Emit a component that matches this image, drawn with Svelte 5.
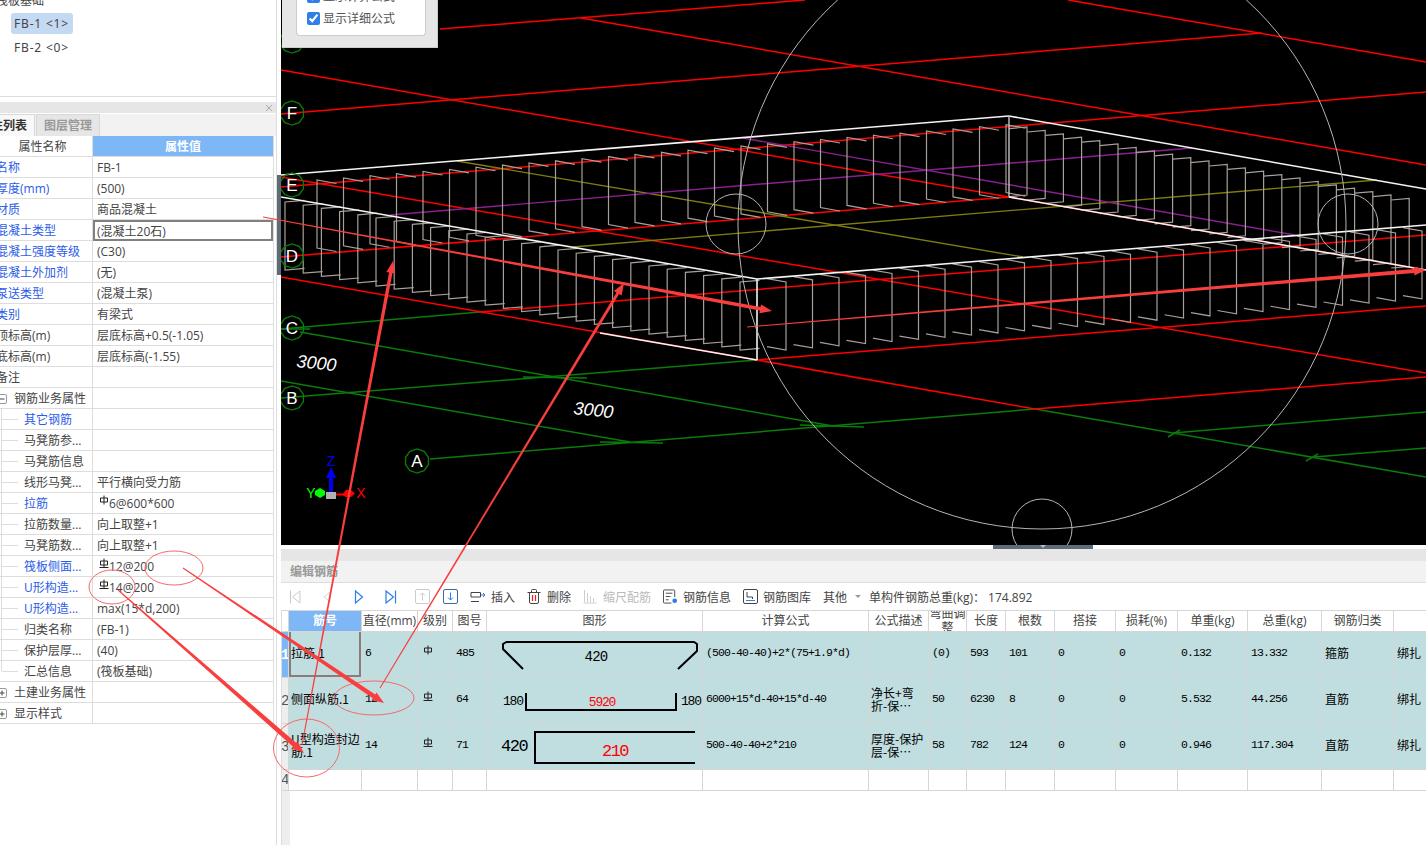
<script lang="ts">
  type Seg = [number, number, number, number];

  const red: Seg[] = [
    [440, 29, 805, 0],
    [581, 18, 1426, 165],
    [281, 114, 1262, 33],
    [281, 70, 1009, 197],
    [1068, 0, 1426, 62],
    [281, 187, 1426, 92],
    [281, 177, 1426, 373],
    [281, 257, 1009, 197],
    [281, 277, 757, 360],
    [757, 360, 1035, 409],
    [1035, 409, 1426, 377],
    [757, 360, 1426, 306],
    [480, 312, 1426, 235],
    [1009, 197, 1426, 270]
  ];
  const green: Seg[] = [
    [281, 329, 480, 312],
    [281, 329, 310, 329],
    [300, 332, 833, 426],
    [281, 398, 757, 360],
    [523, 377, 587, 378],
    [281, 381, 630, 442],
    [430, 459, 1035, 409],
    [600, 442, 663, 443],
    [800, 425, 864, 427],
    [1035, 409, 1426, 477],
    [1173, 433, 1426, 412],
    [1168, 437, 1180, 430],
    [1314, 457, 1426, 448],
    [1306, 461, 1318, 454]
  ];
  const olive: Seg[] = [
    [457, 161, 1023, 257],
    [573, 247, 1377, 180]
  ];
  const purple: Seg[] = [
    [390, 215, 1192, 148],
    [743, 138, 1295, 235]
  ];
  const white: Seg[] = [
    [281, 175, 1009, 116],
    [1009, 116, 1426, 189],
    [281, 197, 757, 279],
    [757, 279, 1426, 225],
    [757, 279, 757, 360],
    [600, 333, 757, 360],
    [1009, 197, 1426, 270]
  ];

  const stirrupRows = [
    { x: 317, y: 180, dx: 26.5, dy: -2.13, n: 27, hx: 19.5, hy: 3.5 },
    { x: 1027, y: 127, dx: 18.2, dy: 3.4, n: 22, hx: -18, hy: 1.6 },
    { x: 285, y: 202, dx: 18.2, dy: 3.2, n: 26, hx: 19.5, hy: -1.6 },
    { x: 786, y: 282, dx: 26.5, dy: -2.13, n: 25, hx: -19, hy: -3.3 }
  ];
  const stirrups = stirrupRows.flatMap((r) =>
    Array.from({ length: r.n }, (_, i) => {
      const x = r.x + i * r.dx;
      const y = r.y + i * r.dy;
      return `M${x + r.hx} ${y + r.hy}L${x} ${y}V${y + 68}L${x + r.hx} ${y + 68 + r.hy}`;
    })
  );

  const axes = [
    { id: 'G', x: 292, y: 41 },
    { id: 'F', x: 292, y: 113 },
    { id: 'E', x: 292, y: 185 },
    { id: 'D', x: 292, y: 256 },
    { id: 'C', x: 292, y: 328 },
    { id: 'B', x: 292, y: 398 },
    { id: 'A', x: 417, y: 461 }
  ];
  const ring = (cx: number, cy: number) =>
    Array.from({ length: 10 }, (_, i) => {
      const a = (i * Math.PI) / 5 + Math.PI / 2;
      return `${cx + 12 * Math.cos(a)},${cy + 12 * Math.sin(a)}`;
    }).join(' ');

  const arrow = (x1: number, y1: number, x2: number, y2: number, w: number) => {
    const len = Math.hypot(x2 - x1, y2 - y1);
    const ux = (x2 - x1) / len;
    const uy = (y2 - y1) / len;
    const bx = x2 - ux * 12;
    const by = y2 - uy * 12;
    const side = (x: number, y: number, d: number) => `${x - uy * d},${y + ux * d}`;
    return [
      side(x1, y1, 0.5),
      side(bx, by, w / 2),
      side(bx, by, 4.5),
      `${x2},${y2}`,
      side(bx, by, -4.5),
      side(bx, by, -w / 2),
      side(x1, y1, -0.5)
    ].join(' ');
  };
  const arrows = [
    arrow(183, 568, 384, 703, 4.5),
    arrow(118, 590, 304, 753, 5),
    arrow(263, 217, 772, 311, 3.5),
    arrow(302, 745, 393, 261, 3.5),
    arrow(380, 688, 624, 283, 3),
    arrow(747, 327, 1426, 270, 4)
  ];

  const props = [
    { name: '名称', value: 'FB-1', link: true },
    { name: '厚度(mm)', value: '(500)', link: true },
    { name: '材质', value: '商品混凝土', link: true },
    { name: '混凝土类型', value: '(混凝土20石)', link: true, active: true },
    { name: '混凝土强度等级', value: '(C30)', link: true },
    { name: '混凝土外加剂', value: '(无)', link: true },
    { name: '泵送类型', value: '(混凝土泵)', link: true },
    { name: '类别', value: '有梁式', link: true },
    { name: '顶标高(m)', value: '层底标高+0.5(-1.05)' },
    { name: '底标高(m)', value: '层底标高(-1.55)' },
    { name: '备注', value: '' },
    { name: '钢筋业务属性', value: '', group: '-' },
    { name: '其它钢筋', value: '', link: true, child: true },
    { name: '马凳筋参...', value: '', child: true },
    { name: '马凳筋信息', value: '', child: true },
    { name: '线形马凳...', value: '平行横向受力筋', child: true },
    { name: '拉筋', value: '6@600*600', link: true, child: true, bar: 1 },
    { name: '拉筋数量...', value: '向上取整+1', child: true },
    { name: '马凳筋数...', value: '向上取整+1', child: true },
    { name: '筏板侧面...', value: '12@200', link: true, child: true, bar: 2 },
    { name: 'U形构造...', value: '14@200', link: true, child: true, bar: 2 },
    { name: 'U形构造...', value: 'max(15*d,200)', link: true, child: true },
    { name: '归类名称', value: '(FB-1)', child: true },
    { name: '保护层厚...', value: '(40)', child: true },
    { name: '汇总信息', value: '(筏板基础)', child: true, last: true },
    { name: '土建业务属性', value: '', group: '+' },
    { name: '显示样式', value: '', group: '+' }
  ];

  const columns = [
    { title: '', width: 8 },
    { title: '筋号', width: 73 },
    { title: '直径(mm)', width: 56 },
    { title: '级别', width: 35 },
    { title: '图号', width: 34 },
    { title: '图形', width: 216 },
    { title: '计算公式', width: 166 },
    { title: '公式描述', width: 60 },
    { title: '弯曲调整', width: 38 },
    { title: '长度', width: 39 },
    { title: '根数', width: 49 },
    { title: '搭接', width: 61 },
    { title: '损耗(%)', width: 62 },
    { title: '单重(kg)', width: 70 },
    { title: '总重(kg)', width: 74 },
    { title: '钢筋归类', width: 72 },
    { title: '', width: 40 }
  ];
  const bars = [
    { name: '拉筋.1', dia: '6', grade: 1, fig: '485', formula: '(500-40-40)+2*(75+1.9*d)', note: '', bend: '(0)', len: '593', count: '101', unit: '0.132', total: '13.332', kind: '箍筋' },
    { name: '侧面纵筋.1', dia: '12', grade: 2, fig: '64', formula: '6000+15*d-40+15*d-40', note: '净长+弯折-保…', bend: '50', len: '6230', count: '8', unit: '5.532', total: '44.256', kind: '直筋' },
    { name: 'U型构造封边筋.1', dia: '14', grade: 2, fig: '71', formula: '500-40-40+2*210', note: '厚度-保护层-保…', bend: '58', len: '782', count: '124', unit: '0.946', total: '117.304', kind: '直筋' }
  ];
</script>

{#snippet barMark(kind: number)}
  <svg class="bar-mark" width="10" height="11" viewBox="0 0 10 11">
    <path d="M1.5 3V7H8.5V3ZM5 .5V9.5" fill="none" stroke="#222" stroke-width="1" />
    {#if kind === 2}<path d="M.5 9.5H9.5" fill="none" stroke="#222" stroke-width="1" />{/if}
  </svg>
{/snippet}

<div class="app">
  <aside class="side">
    <div class="tree">
      <div class="tree-root">筏板基础</div>
      <div class="tree-item selected">FB-1 &lt;1&gt;</div>
      <div class="tree-item">FB-2 &lt;0&gt;</div>
    </div>
    <div class="close-bar">
      <svg width="8" height="8" viewBox="0 0 8 8"><path d="M1 1L7 7M7 1L1 7" stroke="#aaa" fill="none" /></svg>
    </div>
    <div class="tabs">
      <div class="tab on">属性列表</div>
      <div class="tab">图层管理</div>
    </div>
    <div class="props">
      <div class="prop head">
        <div class="name">属性名称</div>
        <div class="val">属性值</div>
      </div>
      {#each props as p}
        <div class="prop">
          <div class="name" class:link={p.link} class:child={p.child} class:last={p.last} class:group={p.group}>
            {#if p.group}
              <svg width="10" height="10" viewBox="0 0 10 10">
                <rect x=".5" y=".5" width="9" height="9" rx="1.5" fill="#fff" stroke="#999" />
                <path d={p.group === '+' ? 'M2.5 5H7.5M5 2.5V7.5' : 'M2.5 5H7.5'} stroke="#444" />
              </svg>
            {/if}
            <span>{p.name}</span>
          </div>
          <div class="val" class:active={p.active}>
            {#if p.bar}{@render barMark(p.bar)}{/if}{p.value}
          </div>
        </div>
      {/each}
    </div>
  </aside>

  <main class="main">
    <div class="viewport">
      <svg class="scene" viewBox="281 0 1145 545" width="1145" height="545">
        {#each green as s}<line x1={s[0]} y1={s[1]} x2={s[2]} y2={s[3]} stroke="#0a7c0a" stroke-width="1.5" />{/each}
        {#each red as s}<line x1={s[0]} y1={s[1]} x2={s[2]} y2={s[3]} stroke="#f00" stroke-width="1.5" />{/each}
        {#each olive as s}<line x1={s[0]} y1={s[1]} x2={s[2]} y2={s[3]} stroke="#7d7d12" stroke-width="1.4" />{/each}
        {#each purple as s}<line x1={s[0]} y1={s[1]} x2={s[2]} y2={s[3]} stroke="#8c1f90" stroke-width="1.4" />{/each}
        {#each stirrups as d}<path {d} fill="none" stroke="#a89f98" stroke-width="1.2" />{/each}
        {#each white as s}<line x1={s[0]} y1={s[1]} x2={s[2]} y2={s[3]} stroke="#f4f4f4" stroke-width="1.6" />{/each}
        <line x1="1009" y1="116" x2="1009" y2="197" stroke="#c8c4c0" stroke-width="1.4" />

        <g fill="none" stroke="#b5b5b5" stroke-width="1">
          <circle cx="1042" cy="225" r="304" />
          <circle cx="736" cy="224" r="30" />
          <circle cx="1348" cy="224" r="30" />
          <circle cx="1042" cy="529" r="30" />
        </g>

        {#each axes as a}
          <polygon points={ring(a.x, a.y)} fill="none" stroke="#0a7c0a" stroke-width="1.3" />
          <text x={a.x} y={a.y + 6} text-anchor="middle" class="axis-label">{a.id}</text>
        {/each}
        <text x="296" y="367" class="dim" transform="rotate(6 296 367)">3000</text>
        <text x="573" y="414" class="dim" transform="rotate(6 573 414)">3000</text>

        <!-- view gizmo -->
        <path d="M331 467L336 478H333V492H329V478H326Z" fill="#0000ee" />
        <rect x="326" y="492" width="10" height="7" fill="#b0b0b0" />
        <path d="M336 493.5H343L346 490H351L355 493.5L351 497H346L343 495.5H336Z" fill="#f00" />
        <path d="M320 488L325 491V495L320 498L315 495V491Z" fill="#0f0" />
        <text x="331" y="466" text-anchor="middle" class="gizmo" fill="#0000ee">Z</text>
        <text x="311" y="498" text-anchor="middle" class="gizmo" fill="#0f0">Y</text>
        <text x="361" y="498" text-anchor="middle" class="gizmo" fill="#f00">X</text>
      </svg>

      <div class="popup">
        <div class="popup-card">
          <label class="check"><input type="checkbox" checked />显示计算公式</label>
          <label class="check"><input type="checkbox" checked />显示详细公式</label>
        </div>
      </div>
    </div>

    <div class="splitter">
      <div class="splitter-handle"></div>
    </div>
    <div class="grip-bar"></div>
    <div class="editor-title">编辑钢筋</div>

    <div class="toolbar">
      <div class="nav">
        <svg width="14" height="14" viewBox="0 0 14 14"><path d="M2.5 .5V13.5M12 1V13L4.5 7Z" fill="none" stroke="#c9c9c9" /></svg>
        <svg width="14" height="14" viewBox="0 0 14 14"><path d="M10 2V12L4 7Z" fill="none" stroke="#d4d4d4" /></svg>
        <svg width="14" height="14" viewBox="0 0 14 14"><path d="M3.5 1V13L10.5 7Z" fill="none" stroke="#2b7de9" stroke-width="1.2" /></svg>
        <svg width="14" height="14" viewBox="0 0 14 14"><path d="M2 1V13L9.5 7ZM11.5 .5V13.5" fill="none" stroke="#2b7de9" stroke-width="1.2" /></svg>
      </div>
      <svg class="box-up" width="15" height="15" viewBox="0 0 15 15"><rect x=".5" y=".5" width="14" height="14" rx="1.5" fill="none" stroke="#ccc" /><path d="M7.5 11.5V4M5 6.5L7.5 4L10 6.5" fill="none" stroke="#ccc" /></svg>
      <svg class="box-down" width="15" height="15" viewBox="0 0 15 15"><rect x=".5" y=".5" width="14" height="14" rx="1.5" fill="none" stroke="#3c6a9c" /><path d="M7.5 3.5V11M5 8.5L7.5 11L10 8.5" fill="none" stroke="#2b7de9" /></svg>
      <div class="tool">
        <svg width="16" height="14" viewBox="0 0 16 14"><path d="M1 2.5H10.5V7H1ZM1 11.5H9" fill="none" stroke="#444" /><path d="M11 5H15M13 3L15 5L13 7" fill="none" stroke="#2b7de9" /></svg>
        插入
      </div>
      <div class="tool wide">
        <svg width="14" height="15" viewBox="0 0 14 15"><path d="M2.5 3.5V13A1.5 1.5 0 0 0 4 14.5H10A1.5 1.5 0 0 0 11.5 13V3.5M.5 3.5H13.5M4.5 3.5V1.5A1 1 0 0 1 5.5 .5H8.5A1 1 0 0 1 9.5 1.5V3.5" fill="none" stroke="#444" /><path d="M5.5 6V12M8.5 6V12" stroke="#e22" stroke-width="1.2" /></svg>
        删除
      </div>
      <div class="tool off wide">
        <svg width="14" height="15" viewBox="0 0 14 15"><path d="M1.5 1V13M4.5 4V13M7.5 7V13M10.5 9V13M.5 14H13.5" fill="none" stroke="#ccc" /></svg>
        缩尺配筋
      </div>
      <div class="tool">
        <svg width="15" height="15" viewBox="0 0 16 15"><path d="M12.5 8V1.5A1 1 0 0 0 11.5 .5H1.5A1 1 0 0 0 .5 1.5V13.5A1 1 0 0 0 1.5 14.5H9" fill="none" stroke="#444" /><path d="M3 4H10M3 7.5H8M3 11H6" stroke="#444" /><circle cx="12.5" cy="12" r="2.5" fill="#2b7de9" /></svg>
        钢筋信息
      </div>
      <div class="tool">
        <svg width="15" height="15" viewBox="0 0 15 15"><rect x=".5" y=".5" width="14" height="14" rx="1.5" fill="none" stroke="#444" /><path d="M4 3V8H9.5V10" fill="none" stroke="#444" /><path d="M3 11.5H12" stroke="#2b7de9" /></svg>
        钢筋图库
      </div>
      <div class="tool">其他<span class="caret"></span></div>
      <div class="total">单构件钢筋总重(kg)： 174.892</div>
    </div>

    <div class="sheet">
      <table>
        <colgroup>
          {#each columns as c}<col style:width="{c.width}px" />{/each}
        </colgroup>
        <thead>
          <tr>
            {#each columns as c, i}
              <th class:index={i === 0} class:current={i === 1}><div>{c.title}</div></th>
            {/each}
          </tr>
        </thead>
        <tbody>
          {#each bars as b, i}
            <tr class="filled">
              <td class="index" class:current={i === 0}>{i + 1}</td>
              <td class="text name-cell" class:picked={i === 0}>{b.name}</td>
              <td>{b.dia}</td>
              <td>{@render barMark(b.grade)}</td>
              <td>{b.fig}</td>
              <td class="figure">
                {#if i === 0}
                  <svg width="216" height="46" viewBox="0 0 216 46">
                    <path d="M36 36L16 16V11L19.5 9H207L210 11V18L191 36" fill="none" stroke="#000" stroke-width="2" />
                    <text x="109" y="28" text-anchor="middle" class="fig-text">420</text>
                  </svg>
                {:else if i === 1}
                  <svg width="216" height="46" viewBox="0 0 216 46">
                    <path d="M39 14V31H189V14" fill="none" stroke="#000" stroke-width="2" />
                    <text x="16" y="26" class="fig-text small">180</text>
                    <text x="115" y="27" text-anchor="middle" class="fig-text small" fill="#f00">5920</text>
                    <text x="194" y="26" class="fig-text small">180</text>
                  </svg>
                {:else}
                  <svg width="216" height="46" viewBox="0 0 216 46">
                    <path d="M208 7H48V38H208" fill="none" stroke="#000" stroke-width="2" />
                    <text x="14" y="26" class="fig-text big">420</text>
                    <text x="128" y="31" text-anchor="middle" class="fig-text big" fill="#f00">210</text>
                  </svg>
                {/if}
              </td>
              <td>{b.formula}</td>
              <td class="text note">{b.note}</td>
              <td>{b.bend}</td>
              <td>{b.len}</td>
              <td>{b.count}</td>
              <td>0</td>
              <td>0</td>
              <td>{b.unit}</td>
              <td>{b.total}</td>
              <td class="text">{b.kind}</td>
              <td class="text">绑扎</td>
            </tr>
          {/each}
          <tr class="blank">
            <td class="index">4</td>
            {#each columns.slice(1) as _}<td></td>{/each}
          </tr>
        </tbody>
      </table>
    </div>
  </main>

  <div class="side-grip"></div>

  <!-- hand-drawn markup on top of the screenshot -->
  <svg class="markup" width="1426" height="845" viewBox="0 0 1426 845">
    <g fill="none" stroke="#f46a6a" stroke-width="1">
      <ellipse cx="174" cy="568" rx="29" ry="17" />
      <ellipse cx="112" cy="587" rx="23" ry="17" />
      <ellipse cx="374" cy="698" rx="40" ry="17" />
      <ellipse cx="306.5" cy="748" rx="33" ry="29" />
    </g>
    {#each arrows as points}<polygon {points} fill="#f93e3e" />{/each}
  </svg>
</div>

<style>
  :global(body) {
    margin: 0;
    background: #fff;
  }

  .app {
    position: relative;
    display: flex;
    width: 1426px;
    height: 845px;
    overflow: hidden;
    font-family: 'Open Sans', 'Noto Sans CJK SC', sans-serif;
    font-size: 12px;
    color: #444;
  }

  .side {
    display: flex;
    flex-direction: column;
    flex: none;
    width: 276px;
    border-right: 1px solid #ddd;
    overflow: hidden;
  }

  .side-grip {
    position: absolute;
    top: 175px;
    left: 277px;
    width: 4px;
    height: 100px;
    background: #5f6b77;
  }

  .tree {
    flex: none;
    height: 96px;
    border-bottom: 1px solid #ddd;
    margin-bottom: 5px;
    overflow: hidden;
    font-family: 'Noto Sans', sans-serif;
    letter-spacing: 0.8px;
  }

  .tree-root {
    height: 20px;
    line-height: 20px;
    margin: -10px 0 3px -4px;
    letter-spacing: 0;
    font-family: 'Noto Sans CJK SC', sans-serif;
  }

  .tree-item {
    width: 56px;
    height: 21px;
    line-height: 21px;
    margin: 0 0 3px 11px;
    padding: 0 3px;
    border-radius: 3px;
    white-space: nowrap;
  }

  .tree-item.selected {
    background: #c4daf2;
  }

  .close-bar {
    display: flex;
    flex: none;
    align-items: center;
    justify-content: flex-end;
    height: 11px;
    padding-right: 3px;
    background: #e6e6e6;
  }

  .tabs {
    display: flex;
    flex: none;
    height: 23px;
    box-sizing: border-box;
    margin-left: -29px;
    background: #f2f2f2;
    border-top: 1px solid #fff;
  }

  .tab {
    width: 64px;
    line-height: 21px;
    text-align: center;
    font-weight: 700;
    color: #999;
    background: #e6e6e6;
    border: 1px solid #d8d8d8;
    border-bottom: none;
    box-sizing: border-box;
  }

  .tab.on {
    margin-right: 1px;
    color: #333;
    background: #f8f8f8;
  }

  .props {
    flex: none;
    width: 281px;
    margin-left: -7px;
    border-right: 1px solid #ddd;
    box-sizing: border-box;
  }

  .prop {
    display: flex;
    height: 21px;
    box-sizing: border-box;
    border-bottom: 1px solid #ddd;
    line-height: 22px;
    white-space: nowrap;
  }

  .name {
    display: flex;
    align-items: center;
    flex: none;
    width: 100px;
    padding: 2px 0 0 3px;
    box-sizing: border-box;
    border-right: 1px solid #ddd;
    overflow: hidden;
  }

  .name.link {
    color: #2b5ce6;
  }

  .name.group {
    gap: 7px;
    padding-left: 4px;
  }

  .name.child {
    padding-left: 31px;
    background:
      linear-gradient(#ddd, #ddd) 9px 50% / 16px 1px no-repeat,
      linear-gradient(#ddd, #ddd) 8px 0 / 1px 100% no-repeat;
  }

  .name.child.last {
    background:
      linear-gradient(#ddd, #ddd) 9px 50% / 16px 1px no-repeat,
      linear-gradient(#ddd, #ddd) 8px 0 / 1px 50% no-repeat;
  }

  .val {
    flex: 1;
    padding-left: 4px;
    min-width: 0;
  }

  .val.active {
    height: 21px;
    margin-bottom: -1px;
    padding-left: 2px;
    line-height: 19px;
    border: 2px solid #808080;
    box-sizing: border-box;
    background: #fff;
  }

  .head .name {
    justify-content: center;
    padding: 2px 0 0;
  }

  .head .val {
    padding: 0;
    text-align: center;
    font-weight: 700;
    color: #fff;
    background: #7eb7f5;
  }

  .bar-mark {
    margin: 0 0 0 2px;
    vertical-align: 2px;
  }

  .main {
    display: flex;
    flex-direction: column;
    flex: none;
    width: 1145px;
    margin-left: 4px;
    min-width: 0;
  }

  .viewport {
    position: relative;
    flex: none;
    height: 545px;
    background: #000;
    overflow: hidden;
  }

  .scene {
    display: block;
  }

  .axis-label {
    font: 17px 'Liberation Sans', sans-serif;
    fill: #fff;
  }

  .dim {
    font: italic 18px 'Liberation Sans', sans-serif;
    fill: #fff;
  }

  .gizmo {
    font: 14px 'Liberation Sans', sans-serif;
  }

  .popup {
    position: absolute;
    top: 0;
    left: 1px;
    width: 156px;
    height: 48px;
    box-sizing: border-box;
    padding-left: 14px;
    background: #e6e6e6;
    border-bottom: 1px solid #ccc;
    border-right: 1px solid #ccc;
  }

  .popup-card {
    display: flex;
    flex-direction: column;
    justify-content: flex-end;
    gap: 8px;
    width: 130px;
    height: 36px;
    padding: 0 0 10px 10px;
    box-sizing: border-box;
    background: #fff;
    border: 1px solid #ccc;
    border-top: none;
    border-radius: 0 0 4px 4px;
    overflow: hidden;
  }

  .check {
    display: flex;
    flex: none;
    align-items: center;
    gap: 3px;
    height: 14px;
    color: #555;
  }

  .check input {
    width: 13px;
    height: 13px;
    margin: 0;
    accent-color: #2f7fe6;
  }

  .splitter {
    flex: none;
    height: 4px;
    padding-left: 712px;
  }

  .splitter-handle {
    display: flex;
    justify-content: center;
    width: 100px;
    height: 4px;
    background: #5f6b77;
  }

  .splitter-handle::after {
    content: '';
    width: 0;
    height: 0;
    border: 3px solid transparent;
    border-top-color: #b8bec4;
    border-bottom: none;
  }

  .grip-bar {
    flex: none;
    height: 12px;
    background: #e6e6e6;
  }

  .editor-title {
    flex: none;
    height: 21px;
    line-height: 21px;
    padding-left: 9px;
    font-weight: 700;
    color: #999;
    background: #f2f2f2;
    border-bottom: 1px solid #ddd;
  }

  .toolbar {
    display: flex;
    flex: none;
    align-items: center;
    gap: 12px;
    height: 27px;
    padding-left: 7px;
    white-space: nowrap;
  }

  .nav {
    display: flex;
    gap: 18px;
    margin-right: 5px;
  }

  .box-down {
    margin-left: 1px;
  }

  .tool {
    display: flex;
    align-items: center;
    gap: 5px;
  }

  .tool.wide {
    gap: 6px;
  }

  .tool.off {
    color: #bbb;
  }

  .caret {
    width: 0;
    height: 0;
    margin-left: 3px;
    border: 3px solid transparent;
    border-top-color: #999;
    border-bottom: none;
  }

  .total {
    margin-left: -4px;
    color: #444;
  }

  .sheet {
    flex: 1;
    background: linear-gradient(#eee, #eee) 0 0 / 8px 100% no-repeat;
    overflow: hidden;
    border-left: 1px solid #ddd;
  }

  table {
    table-layout: fixed;
    width: 1153px;
    margin-left: -2px;
    border-collapse: collapse;
    font-family: 'Liberation Mono', 'Noto Sans CJK SC', monospace;
    font-size: 11.5px;
    letter-spacing: -0.9px;
    color: #000;
  }

  th,
  td {
    box-sizing: border-box;
    padding: 0;
    border: 1px solid #d6d6d6;
    overflow: hidden;
  }

  th {
    height: 21px;
    font: 12px 'Open Sans', 'Noto Sans CJK SC', sans-serif;
    letter-spacing: 0;
    color: #444;
    background: #fff;
  }

  th div {
    display: flex;
    align-items: center;
    justify-content: center;
    height: 20px;
    line-height: 14px;
    white-space: normal;
  }

  th.current {
    color: #fff;
    font-weight: 700;
    background: #7eb7f5;
  }

  td {
    padding: 0 0 4px 3px;
    white-space: pre-wrap;
  }

  tr.filled td {
    height: 46px;
    background: #c0dde0;
  }

  tr.blank td {
    height: 21px;
    background: #fff;
  }

  td.index,
  tr.filled td.index,
  tr.blank td.index {
    padding: 0;
    text-align: center;
    font-size: 14px;
    letter-spacing: 0;
    color: #555;
    background: #eee;
  }

  tr.filled td.index.current {
    font-weight: 700;
    color: #fff;
    background: #7eb7f5;
  }

  th.index {
    background: #fff;
  }

  td.text {
    font: 12px/13px 'Noto Sans CJK SC', sans-serif;
    letter-spacing: 0;
  }

  td.note {
    padding-left: 2px;
  }

  tr.filled td.picked {
    box-shadow:
      inset -2px -2px 0 #808080,
      inset 2px 0 0 #808080;
  }

  td.name-cell {
    padding-left: 2px;
  }

  td.figure {
    padding: 0;
  }

  td.figure svg {
    display: block;
    margin: -1px 0 -3px;
  }

  .fig-text {
    font: 14px 'Liberation Mono', monospace;
    letter-spacing: -0.7px;
  }

  .fig-text.small {
    font-size: 13px;
    letter-spacing: -1.2px;
  }

  .fig-text.big {
    font-size: 17px;
    letter-spacing: -1.5px;
  }

  .markup {
    position: absolute;
    inset: 0;
    pointer-events: none;
  }
</style>
